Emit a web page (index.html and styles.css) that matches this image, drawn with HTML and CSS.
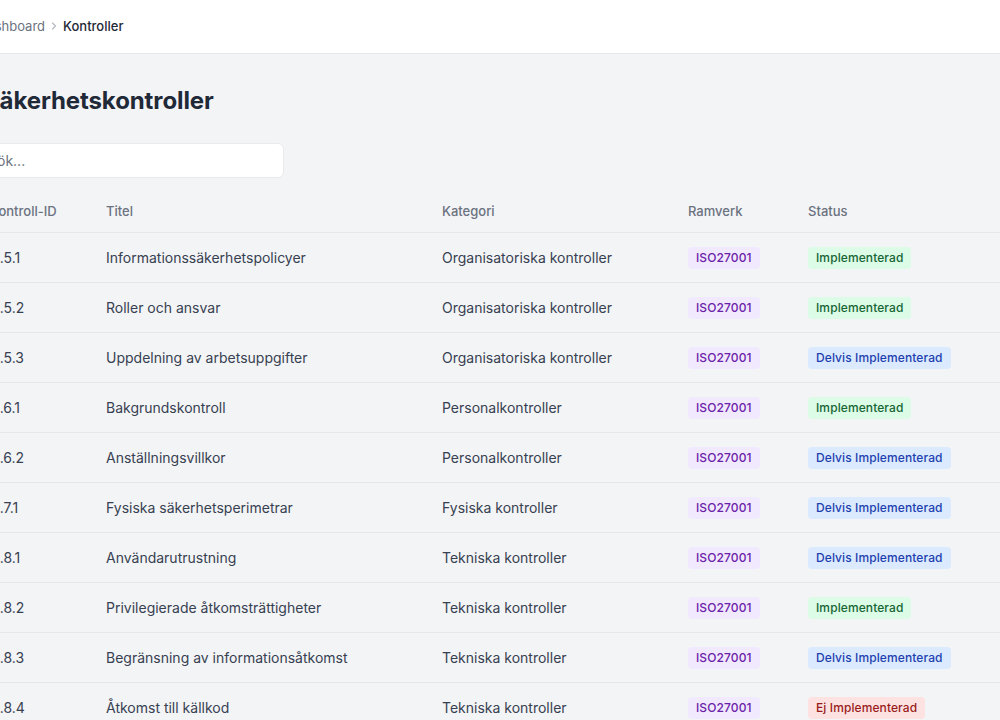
FILE: index.html
```html
<!DOCTYPE html>
<html lang="sv">
<head>
<meta charset="utf-8">
<title>Säkerhetskontroller</title>
<link rel="stylesheet" href="styles.css">
</head>
<body>
<div class="page">
  <header class="topbar">
    <nav class="crumbs">
      <span class="crumb-link">Dashboard</span>
      <svg class="crumb-sep" width="6" height="8" viewBox="0 0 6 8"><path d="M1.5 1 L4.5 4 L1.5 7" fill="none" stroke="#b0b6bf" stroke-width="1.1" stroke-linecap="round" stroke-linejoin="round"/></svg>
      <span class="crumb-current">Kontroller</span>
    </nav>
  </header>
  <main class="main">
    <h1 class="title">Säkerhetskontroller</h1>
    <input class="search" type="text" placeholder="Sök...">
    <table class="controls">
      <colgroup>
        <col class="c-id"><col class="c-title"><col class="c-cat"><col class="c-fw"><col class="c-status">
      </colgroup>
      <thead>
        <tr><th>Kontroll-ID</th><th>Titel</th><th>Kategori</th><th>Ramverk</th><th>Status</th></tr>
      </thead>
      <tbody>
        <tr><td>A.5.1</td><td>Informationssäkerhetspolicyer</td><td>Organisatoriska kontroller</td><td><span class="badge fw">ISO27001</span></td><td><span class="badge ok">Implementerad</span></td></tr>
        <tr><td>A.5.2</td><td>Roller och ansvar</td><td>Organisatoriska kontroller</td><td><span class="badge fw">ISO27001</span></td><td><span class="badge ok">Implementerad</span></td></tr>
        <tr><td>A.5.3</td><td>Uppdelning av arbetsuppgifter</td><td>Organisatoriska kontroller</td><td><span class="badge fw">ISO27001</span></td><td><span class="badge part">Delvis Implementerad</span></td></tr>
        <tr><td>A.6.1</td><td>Bakgrundskontroll</td><td>Personalkontroller</td><td><span class="badge fw">ISO27001</span></td><td><span class="badge ok">Implementerad</span></td></tr>
        <tr><td>A.6.2</td><td>Anställningsvillkor</td><td>Personalkontroller</td><td><span class="badge fw">ISO27001</span></td><td><span class="badge part">Delvis Implementerad</span></td></tr>
        <tr><td>A.7.1</td><td>Fysiska säkerhetsperimetrar</td><td>Fysiska kontroller</td><td><span class="badge fw">ISO27001</span></td><td><span class="badge part">Delvis Implementerad</span></td></tr>
        <tr><td>A.8.1</td><td>Användarutrustning</td><td>Tekniska kontroller</td><td><span class="badge fw">ISO27001</span></td><td><span class="badge part">Delvis Implementerad</span></td></tr>
        <tr><td>A.8.2</td><td>Privilegierade åtkomsträttigheter</td><td>Tekniska kontroller</td><td><span class="badge fw">ISO27001</span></td><td><span class="badge ok">Implementerad</span></td></tr>
        <tr><td>A.8.3</td><td>Begränsning av informationsåtkomst</td><td>Tekniska kontroller</td><td><span class="badge fw">ISO27001</span></td><td><span class="badge part">Delvis Implementerad</span></td></tr>
        <tr><td>A.8.4</td><td>Åtkomst till källkod</td><td>Tekniska kontroller</td><td><span class="badge fw">ISO27001</span></td><td><span class="badge no">Ej Implementerad</span></td></tr>
      </tbody>
    </table>
  </main>
</div>
</body>
</html>
```

FILE: styles.css
```css
* { box-sizing: border-box; }
html, body { margin: 0; padding: 0; }
body {
  font-family: Inter, "Noto Sans", sans-serif;
  background: #f3f4f6;
  color: #374151;
  overflow: hidden;
}
.page {
  margin-left: -40px;
  width: 1200px;
}
.topbar {
  height: 54px;
  background: #ffffff;
  border-bottom: 1px solid #e5e7eb;
  display: flex;
  align-items: center;
  padding: 0 24px 2px 24px;
}
.crumbs {
  display: flex;
  align-items: center;
  gap: 6px;
  margin-left: -6px;
  font-size: 13px;
}
.crumb-link { color: #6b7280; }
.crumb-current { color: #1f2937; font-weight: 500; }
.main {
  padding: 31px 24px 0 24px;
}
.title {
  margin: 0 0 26px 0;
  font-size: 24px;
  line-height: 32px;
  font-weight: 700;
  color: #1f2937;
  letter-spacing: -0.1px;
}
.search {
  display: block;
  width: 310px;
  height: 35px;
  margin-left: -10px;
  border: 1px solid #e8eaee;
  border-radius: 6px;
  background: #ffffff;
  padding: 0 13px;
  font-family: inherit;
  font-size: 14px;
  color: #374151;
  outline: none;
}
.search::placeholder { color: #6b7280; }
.controls {
  margin-top: 16px;
  margin-left: -10px;
  border-collapse: collapse;
  table-layout: fixed;
  width: 1150px;
}
.c-id { width: 116px; }
.c-title { width: 336px; }
.c-cat { width: 246px; }
.c-fw { width: 120px; }
.c-status { width: 332px; }
.controls th {
  text-align: left;
  font-size: 13px;
  font-weight: 500;
  color: #6b7280;
  padding: 10px 16px 13px 16px;
  line-height: 15px;
  border-bottom: 1px solid #e5e7eb;
}
.controls td {
  height: 50px;
  padding: 0 16px;
  font-size: 14px;
  color: #374151;
  border-bottom: 1px solid #e5e7eb;
  vertical-align: middle;
  white-space: nowrap;
}
.badge {
  display: inline-block;
  font-size: 12px;
  font-weight: 500;
  line-height: 22px;
  padding: 0 8px;
  border-radius: 4px;
  letter-spacing: 0.1px;
}
.fw { background: #f1eafe; color: #6b21a8; }
.ok { background: #dcfce7; color: #166534; }
.part { background: #dbeafe; color: #1e40af; }
.no { background: #fee2e2; color: #991b1b; }
```
